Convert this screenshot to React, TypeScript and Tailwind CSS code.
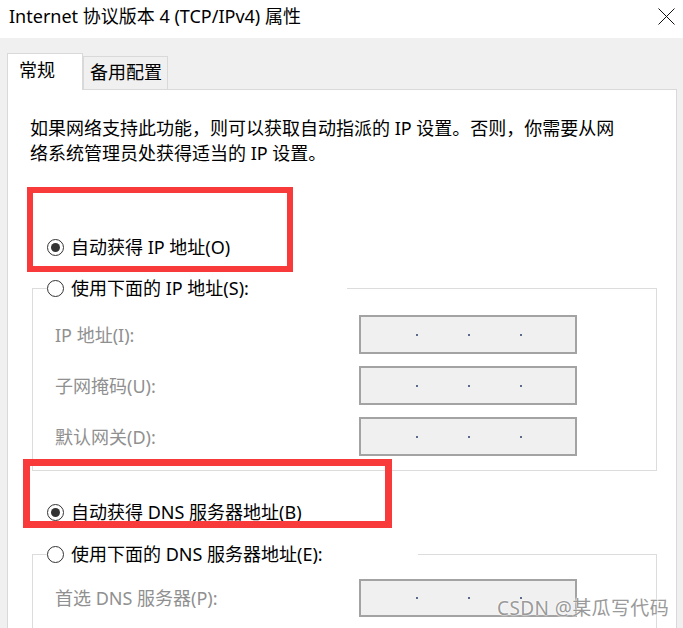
const Radio = ({ checked }: { checked?: boolean }) => (
  <span className="w-[17px] h-[17px] rounded-full border border-[#333] bg-white flex items-center justify-center shrink-0">
    {checked && <span className="w-[9px] h-[9px] rounded-full bg-[#333]" />}
  </span>
)

const IpBox = ({ h = "h-[39px]" }: { h?: string }) => (
  <div className={`w-[218px] ${h} border-2 border-[#a3a3a3] bg-[#f0f0f0] flex items-center pl-[55px] gap-[50px]`}>
    <span className="w-[2px] h-[2px] bg-[#5b6b8a]" />
    <span className="w-[2px] h-[2px] bg-[#5b6b8a]" />
    <span className="w-[2px] h-[2px] bg-[#5b6b8a]" />
  </div>
)

const Field = ({ label, h }: { label: string; h?: string }) => (
  <div className="flex items-center">
    <span className="w-[304px] text-[#909090]">{label}</span>
    <IpBox h={h} />
  </div>
)

export default function App() {
  return (
    <div className="w-[683px] h-[628px] overflow-hidden bg-[#f0f0f0] flex flex-col relative text-black text-[18px] leading-[24px] [font-family:'Noto_Sans','Noto_Sans_CJK_SC',sans-serif]">
      {/* title bar */}
      <div className="h-[38px] shrink-0 bg-white flex items-center justify-between pl-[9px] pr-[8px] pb-[6px]">
        <span className="text-[18px]">Internet 协议版本 4 (TCP/IPv4) 属性</span>
        <svg width="17" height="17" viewBox="0 0 17 17">
          <path d="M0.5 0.5 L16.5 16.5 M16.5 0.5 L0.5 16.5" stroke="#111" strokeWidth="1" />
        </svg>
      </div>

      <div className="pl-[7px] pr-[6px] pt-[15px] flex flex-col flex-1">
        {/* tabs */}
        <div className="flex items-end h-[36px]">
          <div className="relative z-10 w-[76px] h-[37px] -mb-px bg-white border border-b-0 border-[#d9d9d9] pl-[11px] pt-[4px]">
            常规
          </div>
          <div className="w-[85px] h-[33px] bg-[#f0f0f0] border border-b-0 border-[#d9d9d9] pl-[6px] pt-[3px]">
            备用配置
          </div>
        </div>

        {/* panel */}
        <div className="flex-1 bg-white border border-[#d9d9d9] pt-[26px] flex flex-col">
          <p className="pl-[22px] leading-[25px]">
            如果网络支持此功能，则可以获取自动指派的 IP 设置。否则，你需要从网
            <br />
            络系统管理员处获得适当的 IP 设置。
          </p>

          <div className="mt-[69px] pl-[39px] h-[24px] flex items-center gap-[7px]">
            <Radio checked />
            <span>自动获得 IP 地址(O)</span>
          </div>

          <fieldset className="mt-[17px] ml-[24px] w-[625px] border border-[#dcdcdc] p-0">
            <legend className="ml-[14px] w-[300px] h-[24px] flex items-center gap-[7px] p-0">
              <Radio />
              <span>使用下面的 IP 地址(S):</span>
            </legend>
            <div className="pl-[22px] pt-[15px] pb-[14px] flex flex-col gap-[12px]">
              <Field label="IP 地址(I):" />
              <Field label="子网掩码(U):" />
              <Field label="默认网关(D):" />
            </div>
          </fieldset>

          <div className="mt-[29px] pl-[39px] h-[24px] flex items-center gap-[7px]">
            <Radio checked />
            <span>自动获得 DNS 服务器地址(B)</span>
          </div>

          <fieldset className="mt-[18px] ml-[24px] w-[625px] border border-[#dcdcdc] p-0">
            <legend className="ml-[14px] w-[371px] h-[24px] flex items-center gap-[7px] p-0">
              <Radio />
              <span>使用下面的 DNS 服务器地址(E):</span>
            </legend>
            <div className="pl-[22px] pt-[13px] pb-[14px] flex flex-col gap-[12px]">
              <Field label="首选 DNS 服务器(P):" h="h-[38px]" />
            </div>
          </fieldset>
        </div>
      </div>

      {/* red annotation boxes */}
      <div className="absolute left-[27px] top-[187px] w-[266px] h-[85px] border-[6px] border-[#f93a3a]" />
      <div className="absolute left-[23px] top-[459px] w-[369px] h-[69px] border-[7px] border-[#f93a3a]" />

      {/* watermark */}
      <span className="absolute left-[497px] top-[595px] text-[19px] leading-[26px] tracking-[0.4px] text-[#9a9a9a] [text-shadow:0_0_2px_#fff,0_0_2px_#fff]">
        CSDN @某瓜写代码
      </span>
    </div>
  )
}
